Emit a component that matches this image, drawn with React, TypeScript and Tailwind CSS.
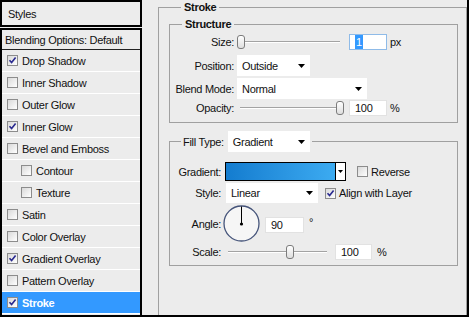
import React from "react";

const STYLE_ROWS = [
  { label: "Drop Shadow", on: true },
  { label: "Inner Shadow" },
  { label: "Outer Glow" },
  { label: "Inner Glow", on: true },
  { label: "Bevel and Emboss" },
  { label: "Contour", sub: true },
  { label: "Texture", sub: true },
  { label: "Satin" },
  { label: "Color Overlay" },
  { label: "Gradient Overlay", on: true },
  { label: "Pattern Overlay" },
  { label: "Stroke", on: true, active: true },
];

function Check({ on }: { on?: boolean }) {
  return (
    <span className="flex h-[11px] w-[11px] shrink-0 items-center justify-center border border-[#8c8c8c] bg-gradient-to-br from-[#d9d9d9] to-white">
      {on && (
        <svg viewBox="0 0 9 9" className="h-[9px] w-[9px]">
          <path d="M1.5 4.3 L3.6 6.6 L7.6 1.6" fill="none" stroke="#29298f" strokeWidth="1.6" />
        </svg>
      )}
    </span>
  );
}

function Arrow() {
  return (
    <svg viewBox="0 0 7 4" className="h-[4px] w-[7px] shrink-0">
      <path d="M0 0 H7 L3.5 4 Z" fill="#000" />
    </svg>
  );
}

function Select({ value, w, h = "h-[21px]" }: { value: string; w: string; h?: string }) {
  return (
    <div className={`flex ${w} ${h} shrink-0 items-center justify-between bg-white pl-[5px] pr-[5px]`}>
      <span>{value}</span>
      <Arrow />
    </div>
  );
}

function Slider({ w, thumb }: { w: string; thumb: number }) {
  return (
    <div className={`relative h-[16px] ${w} shrink-0`}>
      <div className="absolute left-[3px] right-[3px] top-[7px] h-[2px] border-t border-[#a3a3a3] border-b border-b-white" />
      <div
        className="absolute top-[1px] h-[14px] w-[8px] rounded-[3px] border border-[#7c7c7c] bg-gradient-to-b from-white to-[#dedede]"
        style={{ left: thumb }}
      />
    </div>
  );
}

function Field({ children, w, focus }: { children: React.ReactNode; w: string; focus?: boolean }) {
  return (
    <div
      className={`flex h-[16px] ${w} shrink-0 items-center border bg-white pl-[5px] ${
        focus ? "border-[#8fbbe8]" : "border-[#e2e2e2]"
      }`}
    >
      {children}
    </div>
  );
}

export default function App() {
  return (
    <div className="flex h-[317px] w-[469px] overflow-hidden bg-[#ececec] font-['Liberation_Sans',Arial,sans-serif] text-[11px] leading-[14px] tracking-[-0.3px] text-[#111]">
      {/* styles list */}
      <div className="flex w-[142px] shrink-0 flex-col">
        <div className="flex h-[27px] items-center border-2 border-black pl-[6px]">Styles</div>
        <div className="mt-[1px] flex-1 overflow-hidden border-2 border-black">
          <div className="flex h-[20px] items-center border-b border-[#222] pl-[3px]">Blending Options: Default</div>
          {STYLE_ROWS.map(r => (
            <div
              key={r.label}
              className={`flex h-[22px] items-center gap-[4px] border-b border-white ${r.sub ? "pl-[19px]" : "pl-[5px]"} ${
                r.active ? "bg-[#3399ff] font-bold text-white" : ""
              }`}
            >
              <Check on={r.on} />
              <span>{r.label}</span>
            </div>
          ))}
        </div>
      </div>

      {/* stroke settings */}
      <div className="flex flex-1 flex-col border-b-2 border-r-2 border-black pl-[16px]">
        <fieldset className="flex-1 border border-b-0 border-[#a0a0a0] pl-[10px] pr-[8px]">
          <legend className="ml-[12px] bg-[#ececec] px-[3px] font-bold">Stroke</legend>

          <fieldset className="mt-[3px] border border-[#a0a0a0] pb-[6px]">
            <legend className="ml-[12px] bg-[#ececec] px-[3px] font-bold">Structure</legend>
            <div className="mt-[3px] flex h-[16px] items-center">
              <span className="w-[64px] text-right">Size:</span>
              <div className="ml-[3px]"><Slider w="w-[106px]" thumb={0} /></div>
              <div className="ml-[6px]">
                <Field w="w-[38px]" focus>
                  <span className="bg-[#3399ff] px-[1px] text-white">1</span>
                </Field>
              </div>
              <span className="ml-[3px]">px</span>
            </div>
            <div className="mt-[5px] flex h-[21px] items-center">
              <span className="w-[64px] text-right">Position:</span>
              <div className="ml-[3px]"><Select value="Outside" w="w-[73px]" /></div>
            </div>
            <div className="mt-[2px] flex h-[21px] items-center">
              <span className="w-[64px] text-right">Blend Mode:</span>
              <div className="ml-[3px]"><Select value="Normal" w="w-[130px]" /></div>
            </div>
            <div className="mt-[1px] flex h-[16px] items-center">
              <span className="w-[64px] text-right">Opacity:</span>
              <div className="ml-[3px]"><Slider w="w-[106px]" thumb={99} /></div>
              <div className="ml-[6px]"><Field w="w-[38px]">100</Field></div>
              <span className="ml-[3px]">%</span>
            </div>
          </fieldset>

          <fieldset className="mt-[8px] border border-[#a0a0a0] pb-[5px]">
            <legend className="ml-[11px] flex h-[21px] items-center gap-[4px] bg-[#ececec] px-[2px]">
              <span>Fill Type:</span>
              <Select value="Gradient" w="w-[82px]" />
            </legend>
            <div className="mt-[10px] flex h-[19px] items-center">
              <span className="w-[51px] text-right">Gradient:</span>
              <div className="ml-[4px] flex h-[19px] w-[121px] border border-black">
                <div className="flex-1 bg-gradient-to-r from-[#137ccf] to-[#3cabf1]" />
                <div className="flex w-[10px] items-center justify-center border-l border-black bg-white">
                  <svg viewBox="0 0 5 3" className="h-[3px] w-[5px]"><path d="M0 0 H5 L2.5 3 Z" fill="#000" /></svg>
                </div>
              </div>
              <div className="ml-[11px]"><Check /></div>
              <span className="ml-[3px]">Reverse</span>
            </div>
            <div className="mt-[2px] flex h-[20px] items-center">
              <span className="w-[51px] text-right">Style:</span>
              <div className="ml-[5px]"><Select value="Linear" w="w-[92px]" h="h-[20px]" /></div>
              <div className="ml-[7px]"><Check on /></div>
              <span className="ml-[3px]">Align with Layer</span>
            </div>
            <div className="mt-[2px] flex h-[37px] items-center">
              <span className="w-[51px] text-right">Angle:</span>
              <svg viewBox="0 0 37 37" className="ml-[2px] h-[37px] w-[37px] shrink-0">
                <circle cx="18.5" cy="18.5" r="17.5" fill="#f6f6f6" stroke="#45547a" strokeWidth="1.3" />
                <line x1="18.5" y1="19" x2="18.5" y2="1.5" stroke="#000" strokeWidth="1" />
                <circle cx="18.5" cy="19" r="1.6" fill="#000" />
              </svg>
              <div className="ml-[5px] mt-[2px]"><Field w="w-[39px]">90</Field></div>
              <span className="ml-[5px] mt-[-4px]">°</span>
            </div>
            <div className="mt-[2px] flex h-[16px] items-center">
              <span className="w-[51px] text-right">Scale:</span>
              <div className="ml-[4px]"><Slider w="w-[105px]" thumb={61} /></div>
              <div className="ml-[5px]"><Field w="w-[37px]">100</Field></div>
              <span className="ml-[5px]">%</span>
            </div>
          </fieldset>
        </fieldset>
      </div>
    </div>
  );
}
